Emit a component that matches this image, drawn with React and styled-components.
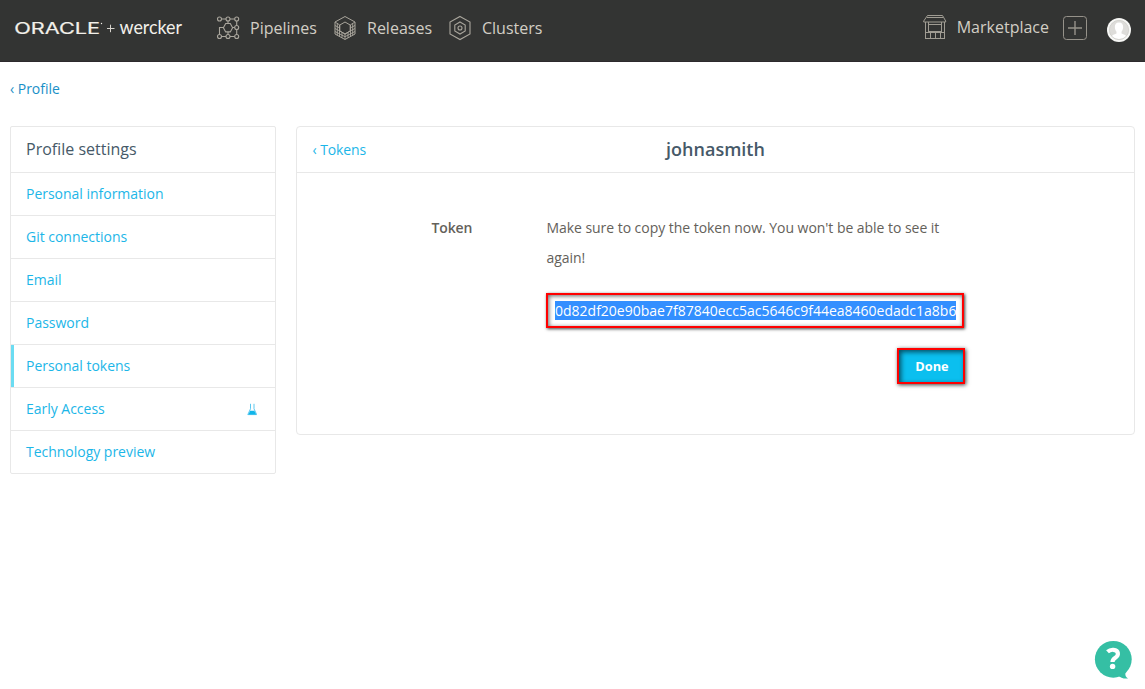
import React from 'react';
import styled, { createGlobalStyle } from 'styled-components';

const GlobalStyle = createGlobalStyle`
  *, *::before, *::after { box-sizing: border-box; }
  body {
    margin: 0;
    background: #fff;
    color: #64615a;
    font-family: "Open Sans", "Noto Sans", sans-serif;
    font-size: 14px;
  }
  a { text-decoration: none; }
  svg { display: block; flex: none; }
`;

const TopBar = styled.header`
  display: flex;
  align-items: center;
  height: 62px;
  padding: 0 14px 6px 14px;
  background: #333433;
  border-bottom: 1px solid #2d2a2d;
`;

const Nav = styled.nav`
  display: flex;
  align-items: center;
  margin-left: 32px;
`;

const NavLink = styled.a`
  display: flex;
  align-items: center;
  gap: 10px;
  width: ${(p) => p.$width}px;
  color: #d2cec5;
  font-size: 16px;
  line-height: 24px;
  white-space: nowrap;
`;

const Actions = styled.div`
  display: flex;
  align-items: center;
  margin-left: auto;
`;

const MarketLink = styled(NavLink)`
  gap: 9px;
  margin-bottom: 2px;
`;

const AddButton = styled.a`
  margin-left: 14px;
`;

const Avatar = styled.a`
  margin: 4px 0 0 20px;
`;

const Page = styled.main`
  padding: 0 10px;
`;

const BackLink = styled.a`
  display: block;
  padding-top: 17px;
  height: 64px;
  line-height: 20px;
  color: #1a90c7;
  letter-spacing: -0.03px;
`;

const Columns = styled.div`
  display: grid;
  grid-template-columns: 266px 1fr;
  gap: 20px;
  align-items: start;
`;

const Card = styled.section`
  border: 1px solid #e8e8e8;
  border-radius: ${(p) => p.$radius || 2}px;
  overflow: hidden;
`;

const SideTitle = styled.h2`
  margin: 0;
  padding: 0 15px;
  height: 45px;
  line-height: 45px;
  font-size: 16px;
  font-weight: 400;
  color: #465968;
`;

const SideItem = styled.a`
  display: flex;
  align-items: center;
  justify-content: space-between;
  height: 43px;
  padding: 0 18px 2px 15px;
  border-top: 1px solid #e8e8e8;
  color: #1cb6e8;
  letter-spacing: -0.02px;
  box-shadow: ${(p) => (p.$active ? 'inset 3px 0 0 #6bdcf2' : 'none')};
`;

const PanelHead = styled.div`
  display: grid;
  grid-template-columns: 1fr auto 1fr;
  align-items: center;
  height: 46px;
  padding: 0 15px;
  border-bottom: 1px solid #e8e8e8;
`;

const PanelBack = styled.a`
  color: #1cb6e8;
  letter-spacing: -0.1px;
  padding-left: 0.5px;
`;

const PanelTitle = styled.h1`
  margin: 0;
  padding-bottom: 2px;
  font-size: 18px;
  line-height: 42px;
  font-weight: 600;
  color: #465968;
`;

const TokenForm = styled.div`
  display: grid;
  grid-template-columns: 115px 419px;
  margin: 0 0 0 134px;
  padding: 40px 0 50px;
  line-height: 30px;
`;

const Label = styled.div`
  padding-left: 0.5px;
  font-weight: 600;
  letter-spacing: -0.15px;
`;

const Message = styled.p`
  margin: 0 0 20px;
  padding-left: 0.4px;
  letter-spacing: -0.04px;
`;

const TokenField = styled.div`
  display: flex;
  align-items: center;
  width: 418px;
  height: 35px;
  padding-left: 7px;
  border: 2px solid #f00;
  box-shadow: 1px 1px 3px rgba(0, 0, 0, 0.75), inset 1px 1px 4px rgba(0, 0, 0, 0.6);
`;

const Selected = styled.span`
  height: 19px;
  line-height: 19px;
  color: #fff;
  background: #338fff;
  white-space: nowrap;
`;

const DoneButton = styled.button`
  display: block;
  width: 68px;
  height: 36px;
  margin: 20px 0 0 auto;
  padding: 0 0 0 2px;
  border: 2px solid #f00;
  background: #0bbfef;
  box-shadow: 1px 1px 4px rgba(0, 0, 0, 0.75), inset 2px 2px 5px rgba(0, 0, 0, 0.6);
  color: #fff;
  font: 700 12.8px "Open Sans", sans-serif;
`;

const Help = styled.a`
  position: fixed;
  right: 11px;
  bottom: 9px;
`;

const Logo = () => (
  <svg width="170" height="24" viewBox="0 0 170 24" fill="#f2f0ea">
    <text x="0.2" y="17.800" fontFamily="Inter, sans-serif" fontWeight="400" fontSize="15.500" textLength="86" lengthAdjust="spacingAndGlyphs" stroke="#f2f0ea" strokeWidth=".2">ORACLE</text>
    <circle cx="87.5" cy="7.5" r="0.7" />
    <path d="M93 12.5h7.5M96.500 8.700v7.5" stroke="#d5d2cc" fill="none" />
    <text x="105.5" y="17.500" fontFamily="Lato, sans-serif" fontSize="18.500" textLength="62.5" lengthAdjust="spacingAndGlyphs">wercker</text>
  </svg>
);

const PipelinesIcon = () => (
  <svg width="24" height="24" viewBox="0 0 24 24" fill="none" stroke="#aaa69d" strokeWidth="1.1">
    {[[3.5, 3], [12, 3], [20.7, 3], [20.7, 11.5], [3.5, 20.5], [12, 20.5], [20.7, 20.5]].map(([x, y]) => (
      <circle key={`${x}-${y}`} cx={x} cy={y} r="2" />
    ))}
    <path d="M5.500 3H10M14 3h4.700M20.700 5v4.500M20.700 13.500v5M18.700 20.500H14M10 20.500H5.500M3.500 18.500v-7h4M12 5v2.500M12 16v2.500M16.500 11.500h2.200M9.700 7.500h4.600l2.300 4.200-2.300 4.200H9.700l-2.300-4.200z" />
  </svg>
);

const ReleasesIcon = () => (
  <svg width="24" height="26" viewBox="0 0 24 26" fill="none" stroke="#aaa69d" strokeWidth="1">
    <path d="M12 1.500 22 7v12l-10 5.500L2 19V7zM12 7l5.200 3v6L12 19l-5.200-3v-6z" />
    <path d="M4.300 8.300v12M6.500 10v11.500M17.500 10v11.500M19.700 8.300v12M9 17.500v5.300M15 17.500v5.300M12 19v5M2 7l4.800 3M22 7l-4.800 3M2 10.500l4.800 2.500M2 13.500l4.800 2.500L12 19l5.200-3L22 13.500M22 10.500l-4.800 2.500M2 16.500l10 5.200 10-5.200" strokeWidth=".9" />
  </svg>
);

const ClustersIcon = () => (
  <svg width="23" height="26" viewBox="0 0 23 26" fill="none" stroke="#aaa69d" strokeWidth="1.1">
    <path d="M11 1.500 21 7v12l-10 5.500L1 19V7zM11 7l5.200 3v6L11 19l-5.200-3v-6z" />
    <circle cx="11" cy="13" r="2" />
  </svg>
);

const MarketIcon = () => (
  <svg width="25" height="26" viewBox="0 0 25 26" fill="none" stroke="#a09c93" strokeWidth="1">
    <path d="M4.500 1.500h15L22.700 7v1H.7V7zM4 3.500h16M2.500 8v17M21.500 8v17M5.500 8v10M18.500 8v10M6 10.500h12M6 17.500h12M2.500 24.500h19M7.500 18v7M12.500 18v7M17.500 18v7M2.500 18.500h19" />
  </svg>
);

const PlusIcon = () => (
  <svg width="24" height="24" viewBox="0 0 24 24" fill="none" stroke="#96928a">
    <rect x=".5" y=".5" width="23" height="23" rx="3" />
    <path d="M5 12h14M12 5v14" strokeWidth="1.4" />
  </svg>
);

const AvatarIcon = () => (
  <svg width="24" height="24" viewBox="0 0 24 24">
    <circle cx="12" cy="12" r="12" fill="#f7f7f5" />
    <circle cx="12" cy="12" r="9.700" fill="#deddda" stroke="#c5c4c0" strokeWidth=".6" />
    <path d="M12 4.500c5 0 5 6 2.500 9.200v1.800c1.500.8 3.500 1 4.500 2.500a9.500 9.500 0 0 1-14 0c1-1.500 3-1.700 4.500-2.500v-1.800C7 10.500 7 4.500 12 4.500z" fill="#fff" />
  </svg>
);

const FlaskIcon = () => (
  <svg width="10" height="13" viewBox="0 0 10 13">
    <path d="M3.500 .8v5L.8 11.600h8.900L7 5.800v-5" fill="none" stroke="#5cc8ef" strokeWidth="1" />
    <path d="M3.200 7.800h4.100l2 3.800H1.300z" fill="#0fb5ea" />
  </svg>
);

const FlaskSlot = styled.span`
  padding-top: 3px;
`;

const HelpIcon = () => (
  <svg width="40" height="40" viewBox="0 0 40 40">
    <circle cx="19.300" cy="19.300" r="18.400" fill="#35bfa4" />
    <path d="M24 35c2.500 3 6 4 10 3.500-2.500-1.500-3-3.500-2.500-6z" fill="#35bfa4" />
    <path d="M13.500 11.800c2-1.800 4-2.200 6-2 5.500.5 5.500 5.700 1.800 8-2 1.200-2.800 2-2.800 4.200" fill="none" stroke="#fff" strokeWidth="4.200" />
    <circle cx="18.600" cy="26.400" r="2.700" fill="#fff" />
  </svg>
);

const settings = [
  'Personal information',
  'Git connections',
  'Email',
  'Password',
  'Personal tokens',
  'Early Access',
  'Technology preview',
];

export default function App() {
  return (
    <>
      <GlobalStyle />
      <TopBar>
        <Logo />
        <Nav>
          <NavLink $width={117}><PipelinesIcon />Pipelines</NavLink>
          <NavLink $width={116}><ReleasesIcon />Releases</NavLink>
          <NavLink $width={100}><ClustersIcon />Clusters</NavLink>
        </Nav>
        <Actions>
          <MarketLink><MarketIcon />Marketplace</MarketLink>
          <AddButton><PlusIcon /></AddButton>
          <Avatar><AvatarIcon /></Avatar>
        </Actions>
      </TopBar>
      <Page>
        <BackLink>‹ Profile</BackLink>
        <Columns>
          <Card>
            <SideTitle>Profile settings</SideTitle>
            {settings.map((name) => (
              <SideItem key={name} $active={name === 'Personal tokens'}>
                {name}
                {name === 'Early Access' && <FlaskSlot><FlaskIcon /></FlaskSlot>}
              </SideItem>
            ))}
          </Card>
          <Card $radius={4}>
            <PanelHead>
              <PanelBack>‹ Tokens</PanelBack>
              <PanelTitle>johnasmith</PanelTitle>
            </PanelHead>
            <TokenForm>
              <Label>Token</Label>
              <div>
                <Message>Make sure to copy the token now. You won't be able to see it again!</Message>
                <TokenField>
                  <Selected>0d82df20e90bae7f87840ecc5ac5646c9f44ea8460edadc1a8b6</Selected>
                </TokenField>
                <DoneButton>Done</DoneButton>
              </div>
            </TokenForm>
          </Card>
        </Columns>
      </Page>
      <Help><HelpIcon /></Help>
    </>
  );
}
